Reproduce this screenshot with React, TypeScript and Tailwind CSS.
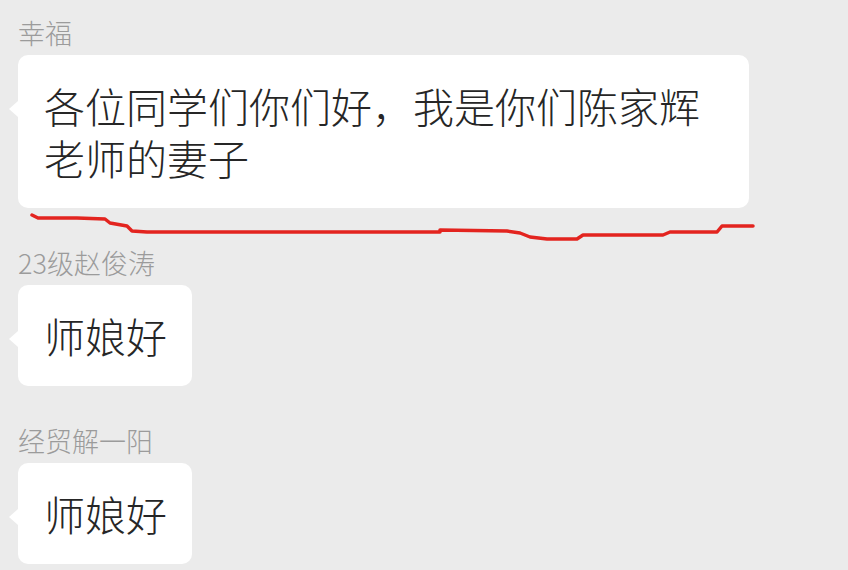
import React from 'react';

type Msg = { name: string; text: string; wide?: boolean };

const messages: Msg[] = [
  { name: '幸福', text: '各位同学们你们好，我是你们陈家辉老师的妻子', wide: true },
  { name: '23级赵俊涛', text: '师娘好' },
  { name: '经贸解一阳', text: '师娘好' },
];

const font = { fontFamily: '"Noto Sans CJK SC", "Noto Sans", sans-serif' };

const Bubble: React.FC<{ msg: Msg }> = ({ msg }) => (
  <div className="mb-[38px]">
    <div className="h-[34px] text-[27px] font-light leading-[34px] text-[#9b9b9b]">{msg.name}</div>
    <div
      className={`relative mt-[5px] rounded-[10px] bg-white pt-[24px] pb-[25px] pl-[26px] text-[41px] font-light leading-[52px] text-[#262626] ${
        msg.wide ? 'w-[731px] pr-[40px]' : 'inline-block pr-[25px]'
      }`}
    >
      {/* tail */}
      <span className="absolute left-[-9px] top-[46px] h-0 w-0 border-y-[8px] border-r-[9px] border-y-transparent border-r-white" />
      {msg.text}
    </div>
  </div>
);

const App: React.FC = () => {
  return (
    <div className="relative h-[570px] w-[848px] overflow-hidden bg-[#ebebeb] pt-[16px] pl-[18px]" style={font}>
      {messages.map((m, i) => (
        <Bubble key={i} msg={m} />
      ))}

      {/* hand-drawn red underline */}
      <svg className="pointer-events-none absolute left-0 top-0" width="848" height="570">
        <polyline
          fill="none"
          stroke="#e3241f"
          strokeWidth="3.5"
          strokeLinejoin="round"
          strokeLinecap="round"
          points="32,215 38,218 77,218 105,219 110,223 127,226 132,231 147,232 440,232 440,230 507,231 520,233 530,237 547,239 577,239 583,235 663,235 670,232 717,232 722,226 753,226"
        />
      </svg>
    </div>
  );
};

export default App;
